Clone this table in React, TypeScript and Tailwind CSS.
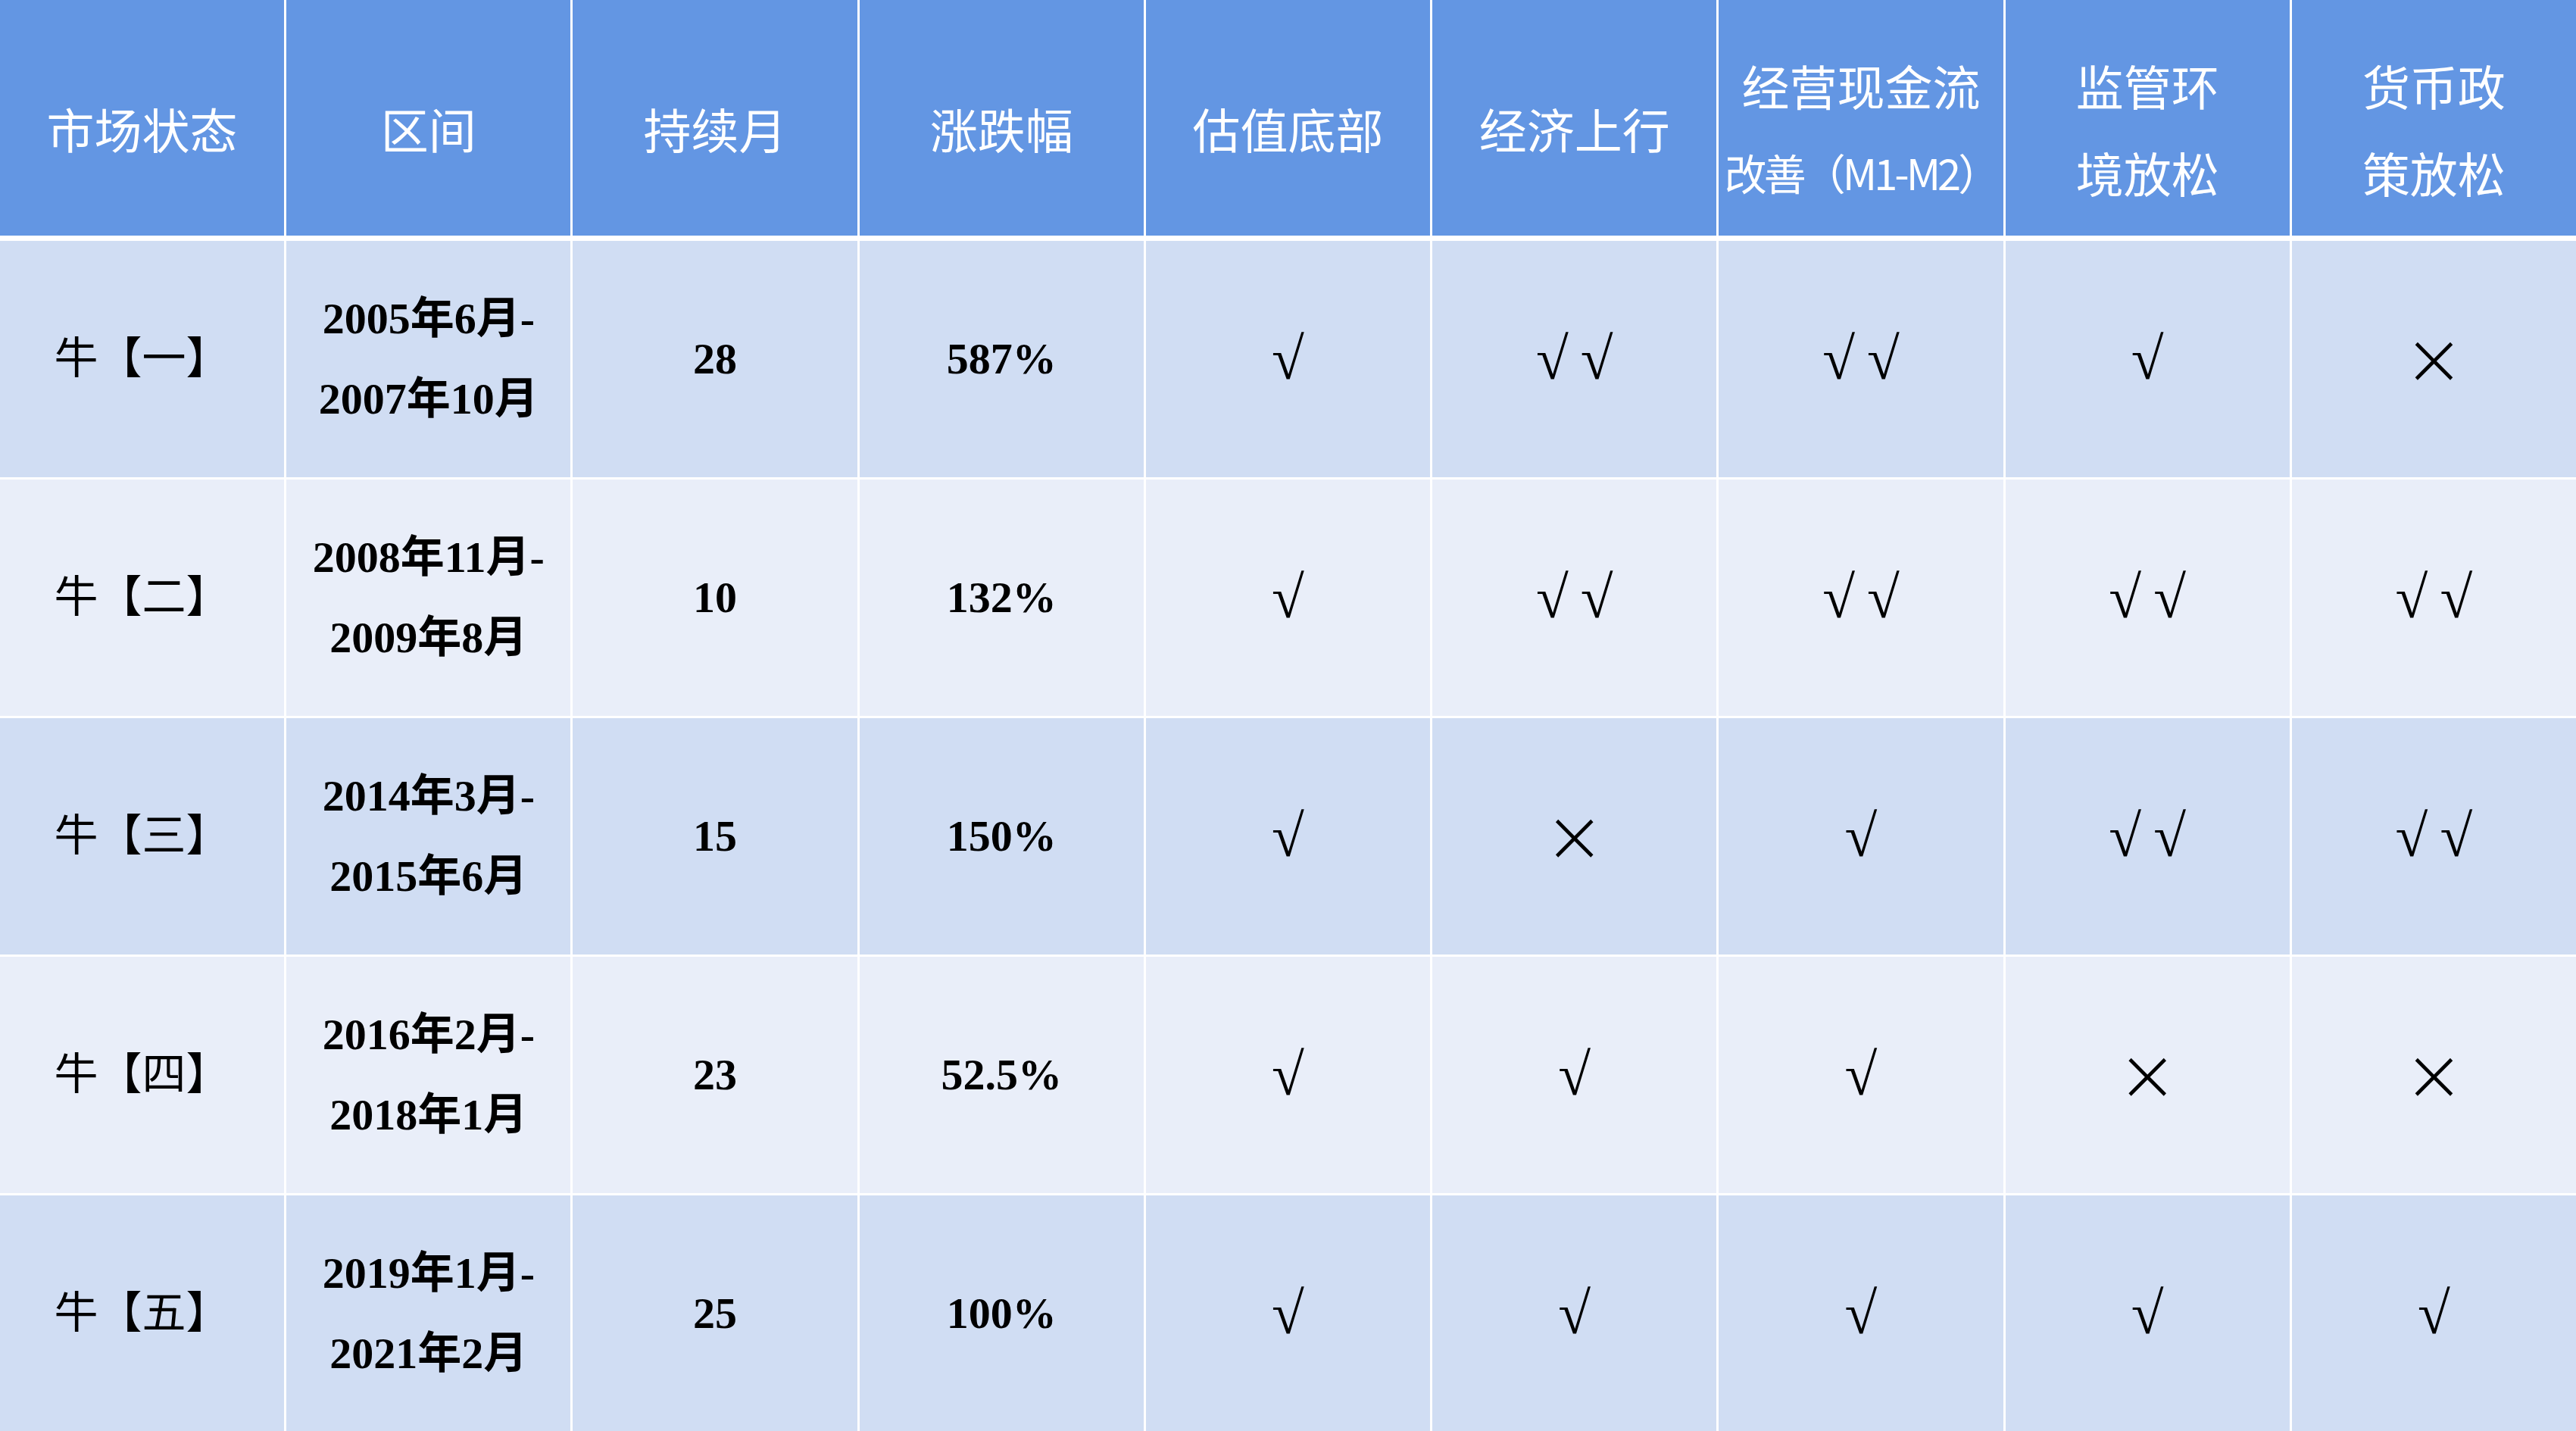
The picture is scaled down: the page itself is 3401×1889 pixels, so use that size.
const headers: string[][] = [
  ["市场状态"],
  ["区间"],
  ["持续月"],
  ["涨跌幅"],
  ["估值底部"],
  ["经济上行"],
  ["经营现金流", "改善（M1-M2）"],
  ["监管环", "境放松"],
  ["货币政", "策放松"],
];

const rows: string[][] = [
  ["牛【一】", "2005年6月-\n2007年10月", "28", "587%", "√", "√ √", "√ √", "√", "×"],
  ["牛【二】", "2008年11月-\n2009年8月", "10", "132%", "√", "√ √", "√ √", "√ √", "√ √"],
  ["牛【三】", "2014年3月-\n2015年6月", "15", "150%", "√", "×", "√", "√ √", "√ √"],
  ["牛【四】", "2016年2月-\n2018年1月", "23", "52.5%", "√", "√", "√", "×", "×"],
  ["牛【五】", "2019年1月-\n2021年2月", "25", "100%", "√", "√", "√", "√", "√"],
];

const Mark = ({ text }: { text: string }) => {
  if (text === "×") {
    return (
      <span
        className="text-[96px] font-light leading-none"
        style={{ fontFamily: '"DejaVu Sans", sans-serif' }}
      >
        ×
      </span>
    );
  }
  return (
    <span className="flex items-center gap-x-[16px] text-[78px] font-bold leading-none">
      {text.split(" ").map((t, i) => (
        <span key={i}>{t}</span>
      ))}
    </span>
  );
};

export default function App() {
  return (
    <div
      className="h-[1889px] w-[3401px] overflow-hidden bg-white"
      style={{ fontFamily: '"Liberation Serif", "Noto Sans CJK SC", serif' }}
    >
      <div className="grid h-[311px] grid-cols-9 gap-x-[3px]">
        {headers.map((lines, i) => (
          <div
            key={i}
            className="flex flex-col items-center justify-center overflow-hidden bg-[#6396e3] pt-[26px] text-[63px] leading-[115px] text-white"
            style={{ fontFamily: '"Noto Sans CJK SC", sans-serif' }}
          >
            {lines.map((l, j) => (
              <div
                key={j}
                className={i === 6 && j === 1 ? "whitespace-nowrap text-[56px] tracking-[-4px]" : "whitespace-nowrap"}
              >
                {l}
              </div>
            ))}
          </div>
        ))}
      </div>
      <div className="mt-[7px] flex flex-col gap-y-[3px]">
        {rows.map((r, ri) => (
          <div key={ri} className="grid h-[312px] grid-cols-9 gap-x-[3px]">
            {r.map((c, ci) => (
              <div
                key={ci}
                className={`flex flex-col items-center justify-center text-center text-[58px] font-bold leading-[106px] text-black ${
                  ri % 2 === 0 ? "bg-[#d0ddf3]" : "bg-[#e9eef9]"
                }`}
              >
                {ci >= 4 ? (
                  <Mark text={c} />
                ) : (
                  c.split("\n").map((l, li) => (
                    <div key={li} className={ci === 0 ? "font-normal" : ""}>
                      {l}
                    </div>
                  ))
                )}
              </div>
            ))}
          </div>
        ))}
      </div>
    </div>
  );
}
